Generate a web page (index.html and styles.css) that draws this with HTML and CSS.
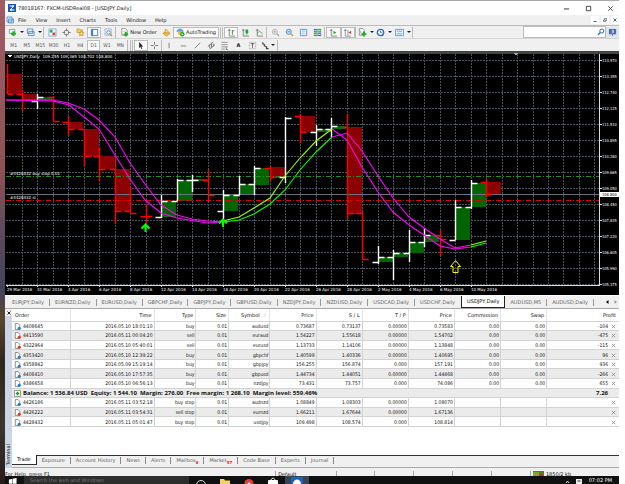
FILE: index.html
```html
<!DOCTYPE html>
<html lang="en">
<head>
<meta charset="utf-8">
<title>78018167: FXCM-USDReal08 - [USDJPY,Daily]</title>
<link rel="stylesheet" href="styles.css">
</head>
<body>
<main class="window">
  <header class="titlebar">
    <svg class="logo" viewBox="0 0 8 8"><rect width="8" height="8" fill="#1557b5"/><path d="M1.5 2h4.5L2 6h4.5M5 1v2M3 5v2" fill="none" stroke="#fff"/></svg>
    <h1>78018167: FXCM-USDReal08 - [USDJPY,Daily]</h1>
    <div class="winctl">
      <button aria-label="Minimize"><svg viewBox="0 0 8 8"><path d="M1 4.5h6" stroke="#222"/></svg></button>
      <button aria-label="Maximize"><svg viewBox="0 0 8 8"><path d="M1.5 1.500h5v5h-5z" fill="none" stroke="#333"/></svg></button>
      <button aria-label="Close"><svg viewBox="0 0 8 8"><path d="M1.500 1.500l5 5m0-5l-5 5" stroke="#333"/></svg></button>
    </div>
  </header>

  <nav class="menubar">
    <svg class="docicon" viewBox="0 0 8 8"><path d="M1 1h5v5H1zM2.500 3h5v4h-5z" fill="#e5f2ff" stroke="#4a87c8" stroke-width=".8"/><path d="M3 5l1.500-1 1 1 1.500-1" fill="none" stroke="#4a87c8" stroke-width=".6"/></svg>
    <a href="#">File</a><a href="#">View</a><a href="#">Insert</a><a href="#">Charts</a><a href="#">Tools</a><a href="#">Window</a><a href="#">Help</a>
    <div class="docctl">
      <button aria-label="Minimize chart"><svg viewBox="0 0 6 6"><path d="M1.500 4.500h3" stroke="#4d5f7d"/></svg></button>
      <button aria-label="Restore chart"><svg viewBox="0 0 6 6"><path d="M2.500 3V1.500h2V4M1.500 3h2v1.500h-2z" fill="none" stroke="#4d5f7d" stroke-width=".7"/></svg></button>
      <button aria-label="Close chart"><svg viewBox="0 0 6 6"><path d="M1.500 1.500l3 3m0-3l-3 3" stroke="#4d5f7d"/></svg></button>
    </div>
  </nav>

  <div class="toolbar">
    <div class="group g-charts">
      <button class="drop" aria-label="New chart"><svg viewBox="0 0 10 10"><path d="M1.500 1.500h6v4.500h-6z" fill="#fff" stroke="#6b7d8c" stroke-width=".8"/><path d="M6 3.500v5.500M3.300 6.300h5.500" stroke="#17b117" stroke-width="2.200"/></svg></button>
      <button class="drop" aria-label="Profiles"><svg viewBox="0 0 10 10"><path d="M1.500 1h6v5h-6zM3 4h6v4.500H3z" fill="#e3eefb" stroke="#5682b4" stroke-width=".9"/></svg></button>
    </div>
    <div class="group g-panels">
      <button aria-label="Market Watch"><svg viewBox="0 0 10 10"><path d="M1 1h8v8H1z" fill="#e9f4ff" stroke="#67a2d8" stroke-width=".8"/><path d="M2 2h3v3H2z" fill="#32ad45"/><path d="M5 5h3v3H5z" fill="#e6402e"/></svg></button>
      <button aria-label="Data Window"><svg viewBox="0 0 10 10"><circle cx="5" cy="5" r="2.700" fill="none" stroke="#777"/><path d="M5 .5v3m0 3v3M.5 5h3m3 0h3" stroke="#777"/></svg></button>
      <button aria-label="Navigator"><svg viewBox="0 0 10 10"><path d="M1 1h3l1 1h2v3H1z" fill="#f5cf58" stroke="#b88a1d" stroke-width=".6"/><path d="M6 3l1 2 2 .3-1.500 1.500.5 2L6 8l-2 1 .4-2.200L3 5.300 5 5z" fill="#ffd34a" stroke="#b37c14" stroke-width=".6"/></svg></button>
      <button class="on" aria-label="Terminal"><svg viewBox="0 0 10 10"><path d="M1.500 1.500h7v7h-7z" fill="#fff" stroke="#3d78c4"/><path d="M1.500 1.500h2v7h-2z" fill="#3d78c4"/></svg></button>
      <button aria-label="Strategy Tester"><svg viewBox="0 0 10 10"><path d="M1 1h7v7H1z" fill="#e3effb" stroke="#8aa8c6" stroke-width=".7"/><circle cx="5" cy="5" r="2" fill="#fff" stroke="#5681b3"/><path d="M6.500 6.500L9 9" stroke="#c79026" stroke-width="1.400"/></svg></button>
    </div>
    <button class="order"><svg viewBox="0 0 10 10"><path d="M2 .5h4l2 2V8H2z" fill="#fff" stroke="#777" stroke-width=".8"/><path d="M3.500 3.500h3" stroke="#888" stroke-width=".6"/><path d="M6.500 4.500v5M4 7h5" stroke="#17b117" stroke-width="2"/></svg>New Order</button>
    <button class="meta" aria-label="MetaEditor"><svg viewBox="0 0 10 10"><path d="M1 6l4-2 4 2-4 3z" fill="#f5c33f" stroke="#a97716" stroke-width=".7"/><path d="M4 1l3 3-1 2-3-1z" fill="#ffd95e" stroke="#a97716" stroke-width=".6"/></svg></button>
    <button class="auto on"><svg viewBox="0 0 10 10"><path d="M1 4c0-4 7-4 7 0z" fill="#5aa5df" stroke="#2b72b0" stroke-width=".5"/><path d="M2 4h5v2l-2 2-3-1z" fill="#f0c04a"/><circle cx="7" cy="7" r="2.500" fill="#17a82a"/><path d="M6.300 5.700v2.600L8.400 7z" fill="#fff"/></svg>AutoTrading</button>
    <i class="grip"></i>
    <div class="group g-types">
      <button class="on" aria-label="Bar chart"><svg viewBox="0 0 10 10"><path d="M2.500 1v8H9M1 2.500h3" fill="none" stroke="#666" stroke-width=".8"/><path d="M6 2.500v5M6 3h2" stroke="#159c25"/></svg></button>
      <button aria-label="Candlesticks"><svg viewBox="0 0 10 10"><path d="M2.500 1v8H9M1 2.500h3" fill="none" stroke="#666" stroke-width=".8"/><path d="M6.500 1v7" stroke="#159c25" stroke-width=".7"/><path d="M5 2h3v4H5z" fill="#1cab2c"/></svg></button>
      <button aria-label="Line chart"><svg viewBox="0 0 10 10"><path d="M2.500 1v8H9M1 2.500h3" fill="none" stroke="#666" stroke-width=".8"/><path d="M2.500 6L5 3.500l3.500 3" fill="none" stroke="#159c25" stroke-width=".8"/></svg></button>
    </div>
    <div class="group g-zoom">
      <button aria-label="Zoom in"><svg viewBox="0 0 10 10"><circle cx="4.200" cy="4.200" r="2.800" fill="#f1f1f1" stroke="#aaa"/><path d="M6.500 6.500l2.500 2.500" stroke="#aaa" stroke-width="1.600"/><path d="M2.700 4.200h3m-1.500-1.500v3" stroke="#999" stroke-width=".8"/></svg></button>
      <button aria-label="Zoom out"><svg viewBox="0 0 10 10"><circle cx="4.200" cy="4.200" r="2.800" fill="#d9ecff" stroke="#4385cb"/><path d="M6.500 6.500l2.500 2.500" stroke="#d79a29" stroke-width="1.600"/><path d="M2.700 4.200h3" stroke="#2766ad" stroke-width=".8"/></svg></button>
      <button aria-label="Arrange"><svg viewBox="0 0 10 10"><path d="M1.500 1.500h7v7h-7z" fill="#eaf4ff" stroke="#5c92c9"/><path d="M3 3.500h4M3.500 5v2m2-2v2" stroke="#89aed4" stroke-width=".8"/></svg></button>
      <button aria-label="Tile windows"><svg viewBox="0 0 10 10"><path d="M1 1h3.800v3.800H1z" fill="#3b6fc0"/><path d="M5.200 1H9v3.800H5.200z" fill="#36a839"/><path d="M1 5.200h3.800V9H1z" fill="#36a839"/><path d="M5.200 5.200H9V9H5.200z" fill="#3b6fc0"/><path d="M1.500 3h2.700m1.500 0h2.700m-6.900 4h2.700m1.500 0h2.700" stroke="#e8f3e8" stroke-width="1.200"/></svg></button>
    </div>
    <div class="group g-scroll">
      <button class="on" aria-label="Auto scroll"><svg viewBox="0 0 10 10"><path d="M2.500 1v8H9M1 2.500h3" fill="none" stroke="#666" stroke-width=".8"/><path d="M5 3l3 2-3 2z" fill="#1ba72b"/></svg></button>
      <button class="on" aria-label="Chart shift"><svg viewBox="0 0 10 10"><path d="M2.500 1v8H9M1 2.500h3M5.500 2v6" fill="none" stroke="#5b7a96" stroke-width=".8"/><path d="M9 3L6 5l3 2z" fill="#c8502c"/></svg></button>
    </div>
    <div class="group g-tools">
      <button class="drop" aria-label="Indicators"><svg viewBox="0 0 10 10"><path d="M1.500.5h4l1.500 2V8H1.500z" fill="#fff" stroke="#777" stroke-width=".8"/><path d="M3 3v3" stroke="#777" stroke-width=".7"/><path d="M6.500 4v5.500M3.800 6.800h5.500" stroke="#17b117" stroke-width="2"/></svg></button>
      <button class="drop" aria-label="Periods"><svg viewBox="0 0 10 10"><circle cx="5" cy="5" r="3.500" fill="#fff" stroke="#2b6fc2" stroke-width="1.600"/><path d="M5 3v2h1.500" fill="none" stroke="#333" stroke-width=".7"/></svg></button>
      <button class="drop" aria-label="Templates"><svg viewBox="0 0 10 10"><path d="M.5 1.500h9v7h-9z" fill="#e6f2ff" stroke="#5c92c9" stroke-width=".9"/><path d="M2 4l2-1 2 1 2-1" fill="none" stroke="#c4533c" stroke-width=".8"/><path d="M2 7l2-1 2 1 2-1" fill="none" stroke="#3a9b4b" stroke-width=".8"/></svg></button>
    </div>
    <div class="search">
      <input type="search" aria-label="Search">
      <svg viewBox="0 0 8 8"><circle cx="4.800" cy="3" r="2" fill="none" stroke="#2a6cc8"/><path d="M3.300 4.500L1 7" stroke="#2a6cc8" stroke-width="1.300"/></svg>
    </div>
    <button class="chat" aria-label="Chat"><svg viewBox="0 0 10 10"><path d="M1 1h8v6H6L5 9 4 7H1z" fill="#4d6ba6"/><path d="M4 2.500h2v1.500H4.500M6 4v1.500H4" fill="none" stroke="#fff" stroke-width=".7"/></svg></button>
  </div>

  <div class="toolbar second">
    <div class="group g-frames">
      <button>M1</button><button>M5</button><button>M15</button><button>M30</button><button>H1</button><button>H4</button><button class="on">D1</button><button>W1</button><button>MN</button>
    </div>
    <i class="grip"></i>
    <div class="group g-cursor">
      <button class="on" aria-label="Cursor"><svg viewBox="0 0 10 10"><path d="M3.500 1v7l1.500-1.500 1 2.500 1-.5-1-2.300h2z" fill="#222"/></svg></button>
      <button aria-label="Crosshair"><svg viewBox="0 0 10 10"><path d="M5 1v3m0 2v3M1 5h3m2 0h3" stroke="#666"/></svg></button>
    </div>
    <div class="group g-lines">
      <button aria-label="Vertical line"><svg viewBox="0 0 10 10"><path d="M4.500 2v6" stroke="#777"/></svg></button>
      <button aria-label="Horizontal line"><svg viewBox="0 0 10 10"><path d="M2 5.500h6" stroke="#777"/></svg></button>
      <button aria-label="Trendline"><svg viewBox="0 0 10 10"><path d="M2 8l6-6" stroke="#777"/></svg></button>
      <button aria-label="Channel"><svg viewBox="0 0 10 10"><path d="M1 6l6-5M3 9l6-5M3 4v4m2-6v5m2-4v3" stroke="#666" stroke-width=".9"/></svg></button>
      <button aria-label="Fibonacci"><svg viewBox="0 0 10 10"><path d="M1.500 1.500h7m-7 2.500h7m-7 2.500h7m-7 2.500h4" stroke="#777" stroke-width=".8"/><path d="M7 7v2.500h2" fill="none" stroke="#555" stroke-width=".8"/></svg></button>
      <button class="letter">A</button>
      <button aria-label="Text label"><svg viewBox="0 0 10 10"><path d="M1.500 1.500h7v7h-7z" fill="none" stroke="#999" stroke-width=".8" stroke-dasharray="1 .6"/><path d="M3 3h4M5 3v4.500" stroke="#555"/></svg></button>
      <button class="drop" aria-label="Arrows"><svg viewBox="0 0 10 10"><path d="M1.500 2l3 2.500M3 5l4 2M2 1.500v2.500m4 2v2.500h2.500" stroke="#444" stroke-width="1.200" fill="none"/></svg></button>
    </div>
  </div>

  <section class="chart" aria-label="USDJPY,Daily">
    <svg id="chart" viewBox="5 51 614 244"></svg>
  </section>

  <nav class="charttabs">
    <a href="#">EURJPY,Daily</a><a href="#">EURNZD,Daily</a><a href="#">EURUSD,Daily</a><a href="#">GBPCHF,Daily</a><a href="#">GBPJPY,Daily</a><a href="#">GBPUSD,Daily</a><a href="#">NZDJPY,Daily</a><a href="#">NZDUSD,Daily</a><a href="#">USDCAD,Daily</a><a href="#">USDCHF,Daily</a><a href="#" class="active">USDJPY,Daily</a><a href="#">AUDUSD,M5</a><a href="#">AUDUSD,Daily</a>
    <span class="arrows"><button aria-label="Previous tabs"><svg viewBox="0 0 4 6"><path d="M3.500 1v4L1 3z" fill="#000"/></svg></button><button aria-label="Next tabs"><svg viewBox="0 0 4 6"><path d="M.5 1v4L3 3z" fill="#999"/></svg></button></span>
  </nav>

  <section class="terminal">
    <aside class="side"><button aria-label="Close terminal"><svg viewBox="0 0 6 6"><path d="M1.500 1.500l3 3m0-3l-3 3" stroke="#222"/></svg></button><span>Terminal</span></aside>
    <div class="pane">
      <div class="sheet">
      <table>
        <colgroup><col class="c-order"><col class="c-time"><col class="c-type"><col class="c-size"><col class="c-symbol"><col class="c-num"><col class="c-num"><col class="c-num"><col class="c-num"><col class="c-num"><col class="c-num"><col class="c-profit"></colgroup>
        <thead><tr><th>Order</th><th>Time</th><th>Type</th><th>Size</th><th class="sorted">Symbol<span>⁄</span></th><th>Price</th><th>S / L</th><th>T / P</th><th>Price</th><th>Commission</th><th>Swap</th><th>Profit</th></tr></thead>
        <tbody id="orders"></tbody>
      </table>
      </div>
      <nav class="tabs">
        <a href="#" class="active">Trade</a><a href="#">Exposure</a><a href="#">Account History</a><a href="#">News</a><a href="#">Alerts</a><a href="#">Mailbox<sub>8</sub></a><a href="#">Market<sub>57</sub></a><a href="#">Code Base</a><a href="#">Experts</a><a href="#">Journal</a>
      </nav>
    </div>
  </section>

  <footer class="status">
    <span class="help">For Help, press F1</span><span class="profile">Default</span><span></span><span></span><span></span><span></span><span></span><span class="net"><svg viewBox="0 0 11 6"><rect width="11" height="6" fill="#587c1f"/><path d="M1 1v4m2-4v4m2-4v4" stroke="#a6cf4e"/><path d="M6 3h4v3H6z" fill="#b53b2b"/></svg>1850/2 kb</span>
  </footer>

  <div class="taskbar">
    <svg class="start" viewBox="0 0 10 7"><path d="M1 2.500l3.500-.8V7H1zM5 1.600L9.500.8V7H5z" fill="#fff"/></svg>
    <div class="find">Search the web and Windows</div>
    <div class="apps">
      <span><svg viewBox="0 0 12 7"><circle cx="6" cy="8" r="4.500" fill="none" stroke="#ddd"/></svg></span>
      <span><svg viewBox="0 0 12 7"><path d="M1 2h4l1 1.500h5V7H1z" fill="#f6d264"/></svg></span>
      <span><svg viewBox="0 0 12 7"><circle cx="6" cy="6.500" r="4.500" fill="#db4437"/><circle cx="6" cy="7" r="1.500" fill="#fff"/></svg></span>
      <span><svg viewBox="0 0 12 7"><path d="M1.500 3.500h9V7h-9zM4 3.500c0-3 4-3 4 0" fill="none" stroke="#fff"/><path d="M1.500 4h9v3h-9z" fill="#fff"/></svg></span>
      <span class="current"><svg viewBox="0 0 12 7"><rect width="12" height="7" fill="#1a5fd0"/><path d="M2 7c0-6 8-6 8 0z" fill="#fff"/></svg></span>
    </div>
    <div class="tray"><svg viewBox="0 0 18 7"><path d="M1 6l1.500-2L4 6" fill="none" stroke="#ddd"/><path d="M11 2h6v5h-6z" fill="#eee"/><path d="M12.500 4h3" stroke="#333"/></svg><time>07:02 PM</time></div>
  </div>
</main>
<script src="chart.js"></script>
</body>
</html>
```
FILE: chart.js
```js
const STEP = 15.47;
const barX = i => 22 + STEP * i;
const out = [];
const add = s => out.push(s);

// Frame and grid
add('<rect class="edge" x="5" y="51" width="614" height="3"/>');
let grid = '';
for (let i = 0; i <= 37; i++) grid += `M${Math.round(barX(i))}.5 54V285`;
for (let y = 60; y <= 284; y += 16) grid += `M6 ${y}.5H599`;
add(`<path class="grid" d="${grid}"/>`);

// Each bar: slot, direction, high, low, body top, body bottom, left tick, right tick
const bars = [
  [-1, 'd', 64, 94, 74, 94, 0, 94], [0, 'd', 90, 111, 94, 101, 94, 0],
  [1, 'u', 94, 109, 97, 100, 101, 97], [2, 'd', 96, 121, 0, 0, 97, 121],
  [3, 'd', 116, 136, 122, 129, 122, 129], [4, 'd', 129, 166, 129, 156, 129, 156],
  [5, 'd', 147, 181, 156, 169, 156, 169], [6, 'd', 157, 224, 169, 211, 169, 211],
  [7, 'd', 187, 213, 0, 0, 211, 213], [8, 'd', 204, 223, 0, 0, 216, 216],
  [9, 'u', 195, 218, 201, 217, 217, 201], [10, 'u', 179, 201, 180, 201, 201, 180],
  [11, 'u', 175, 192, 179, 181, 180, 180], [12, 'd', 170, 201, 0, 0, 180, 195],
  [13, 'u', 190, 220, 195, 211, 211, 195], [14, 'u', 176, 195, 184, 195, 195, 184],
  [15, 'u', 166, 195, 168, 185, 184, 168], [16, 'd', 166, 182, 167, 178, 168, 177],
  [17, 'u', 117, 183, 0, 0, 177, 118], [18, 'd', 114, 143, 116, 132, 116, 132],
  [19, 'u', 125, 146, 129, 132, 132, 129], [20, 'u', 118, 137, 126, 129, 129, 126],
  [21, 'd', 114, 219, 127, 214, 127, 213], [22, 'd', 211, 260, 0, 0, 213, 259],
  [23, 'u', 246, 264, 257, 262, 262, 257], [24, 'u', 250, 280, 253, 257, 257, 253],
  [25, 'u', 230, 262, 242, 253, 253, 242], [26, 'u', 228, 247, 235, 242, 242, 235],
  [27, 'd', 230, 256, 0, 0, 235, 239], [28, 'u', 200, 240, 207, 240, 240, 207],
  [29, 'u', 180, 209, 183, 207, 207, 183], [30, 'd', 179, 197, 182, 195, 182, 194]
];
for (const [i, dir, , , top, bottom] of bars)
  if (bottom) add(`<rect class="body-${dir}" x="${Math.round(barX(i))}" y="${top}" width="15" height="${bottom - top}"/>`);

add('<path class="price" d="M6 194.500H599"/>');
add('<path class="order-open" d="M6 176.500H599"/><path class="order-stop" d="M6 200.500H599"/>');

for (const [i, dir, high, low, , , left, right] of bars) {
  const x = Math.max(6, Math.round(barX(i))) + 0.5;
  let d = `M${x} ${high}V${low}`;
  if (left) d += `M${x} ${left}.5h-6`;
  if (right) d += `M${x} ${right}.5h6`;
  add(`<path class="bar-${dir}" d="${d}"/>`);
}

// Moving averages
const line = (cls, pts) => add(`<polyline class="${cls}" points="${pts}"/>`);
line('ma-down', '6,100 53,100 68,103 84,109 99,120 115,137 130,163 145,184 161,205 177,215 192,219 207,221 223,222');
line('ma-down', '6,100 53,101 69,105 84,117 99,129 115,155 130,179 145,200 161,213 177,218 207,223 223,222');
line('ma-down', '332,129 347,140 362,167 378,192 393,212 409,225 424,235 440,246 455,249 471,247');
line('ma-down', '332,137 347,133 362,151 378,176 393,198 409,217 424,228 440,239 455,248 471,245');
line('ma-fast', '223,221 239,217 254,208 270,198 285,176 300,158 316,141 332,129');
line('ma-slow', '223,222 239,220 254,214 270,204 285,190 300,170 316,152 332,137');
line('ma-fast', '471,245 486,241');
line('ma-slow', '471,247 486,243');

// Signal arrows
add('<path class="signal" d="M145.500 232V224M141.500 228.500l4-4 4 4M223 227v-8M219 223.500l4-4 4 4"/>');
add('<path class="signal-open" d="M455.500 260.500l-5 6h2.500v6h5v-6h2.500z"/>');

// Axes
add('<path class="axis" d="M6 285.500H599.500V54"/>');
const prices = ['113.970', '113.355', '112.740', '112.125', '111.510', '110.895', '110.280', '109.665', '109.050', '108.450', '107.835', '107.220', '106.605', '105.990', '105.375'];
prices.forEach((p, n) => add(`<path class="axis" d="M600 ${60 + 16 * n}.5h2"/><text x="602" y="${62 + 16 * n}">${p}</text>`));
const dates = ['29 Mar', '31 Mar', '4 Apr', '6 Apr', '8 Apr', '12 Apr', '14 Apr', '18 Apr', '20 Apr', '22 Apr', '26 Apr', '28 Apr', '2 May', '4 May', '6 May', '10 May'];
dates.forEach((t, n) => {
  const x = Math.round(barX(2 * n - 1));
  add(`<path class="axis" d="M${x}.5 285v2"/><text class="wide" x="${x}" y="291">${t} 2016</text>`);
});
add('<rect x="600" y="192" width="19" height="5" fill="#fff"/><text class="now" x="602" y="196">108.800</text>');
add('<path d="M8 55h4l-2 3z" fill="#fff"/><text class="wide" x="14" y="58">USDJPY,Daily&#160; 109.255 109.365 108.702 108.800</text>');
add('<text class="wide" x="10" y="175">#4428432 buy stop 0.01</text><text class="wide" x="10" y="199">#4428432 sl</text>');
add('<path d="M514 53h4l-2 3z" fill="#9aa9bd"/>');
document.getElementById('chart').innerHTML = out.join('');

// Terminal rows
const orders = [
  '4408645|2016.05.10 18:01:10|buy|0.01|audusd|0.73687|0.73137|0.00000|0.73583|0.00|0.00|-104',
  '4413590|2016.05.11 00:04:20|sell|0.01|euraud|1.54227|1.55618|0.00000|1.54702|0.00|0.00|-475',
  '4322964|2016.05.10 05:40:01|sell|0.01|eurusd|1.13733|1.14106|0.00000|1.13848|0.00|0.00|-115',
  '4353420|2016.05.10 12:39:22|buy|0.01|gbpchf|1.40599|1.40336|0.00000|1.40695|0.00|0.00|96',
  '4358842|2016.05.09 15:19:14|buy|0.01|gbpjpy|156.255|156.874|0.000|157.191|0.00|0.00|936',
  '4408410|2016.05.10 17:57:35|buy|0.01|gbpusd|1.44734|1.44051|0.00000|1.44468|0.00|0.00|-266',
  '4386658|2016.05.10 06:56:13|buy|0.01|nzdjpy|73.431|73.757|0.000|74.086|0.00|0.00|655',
  null,
  '4426186|2016.05.11 03:52:18|buy stop|0.01|audnzd|1.08849|1.08303|0.00000|1.08070||| ',
  '4426222|2016.05.11 03:54:31|sell stop|0.01|eurnzd|1.66211|1.67644|0.00000|1.67136||| ',
  '4428432|2016.05.11 05:01:47|buy stop|0.01|usdjpy|109.498|108.574|0.000|108.814||| '
];
const icon = color => `<svg viewBox="0 0 8 8"><path d="M1.500.5h3l2 2v5h-5z" fill="#fff" stroke="#666" stroke-width=".8"/><circle cx="6" cy="6" r="1.800" fill="${color}"/></svg>`;
const close = '<button aria-label="Close order"><svg viewBox="0 0 6 6"><path d="M1 1l4 4m0-4L1 5" stroke="#888"/></svg></button>';
document.getElementById('orders').innerHTML = orders.map(row => {
  if (!row) return '<tr class="balance"><td colspan="11"><svg viewBox="0 0 8 8"><path d="M.5.500h7v7h-7z" fill="#fff" stroke="#888"/><path d="M4 2v4M2 4h4" stroke="#12a012" stroke-width="1.500"/></svg>Balance: 1 536.84 USD&nbsp; Equity: 1 544.10&nbsp; Margin: 276.00&nbsp; Free margin: 1 268.10&nbsp; Margin level: 559.46%</td><td>7.26</td></tr>';
  const cells = row.split('|');
  const color = cells[2].startsWith('buy') ? '#1d7fd0' : '#df3a1c';
  return '<tr>' + cells.map((c, n) => `<td>${n === 0 ? icon(color) : ''}${c}${n === 11 ? close : ''}</td>`).join('') + '</tr>';
}).join('');
```
FILE: styles.css
```css
* { box-sizing: border-box; }
body {
  margin: 0;
  height: 100vh;
  overflow: hidden;
  padding: 0 6px 0 5px;
  background:
    linear-gradient(#a05c62, #8f5158 35%, #5d4a5c 48%, #44435a 60%, #5b4630 66%, #2e261d 75%, #3f352f 88%, #241d1a) left / 5px 100% no-repeat,
    #fff;
  font: 5px/8px "DejaVu Sans", sans-serif;
  color: #111;
}
button {
  margin: 0; padding: 0; border: 1px solid transparent; background: none;
  font: inherit; color: inherit;
  display: flex; align-items: center; justify-content: center;
}
a { color: inherit; text-decoration: none; }
svg { display: block; flex: none; }

.window { display: flex; flex-direction: column; height: 100%; background: #f0f0f0; }

.titlebar { display: flex; align-items: center; height: 15px; padding-left: 3px; background: #fff; border-top: 1px solid #aaa; flex: none; }
.logo { width: 8px; height: 8px; margin-right: 2px; }
.titlebar h1 { margin: 0; font-size: 5px; font-weight: 400; }
.winctl { display: flex; margin-left: auto; gap: 14px; padding-right: 5px; }
.winctl svg { width: 7px; height: 7px; }
.winctl button { border: 0; width: 8px; }

.menubar { display: flex; align-items: center; height: 10px; padding-left: 1px; gap: 9px; flex: none; }
.docicon { width: 8px; height: 8px; margin-right: -5px; }
.docctl { display: flex; gap: 2px; margin-left: auto; }
.docctl button { border: 0; width: 8px; height: 8px; background: #fff; }
.docctl svg { width: 6px; height: 6px; }

.toolbar { display: flex; align-items: center; height: 13px; padding-left: 2px; border-top: 1px solid #bbb; flex: none; }
.toolbar svg { width: 9px; height: 9px; }
.toolbar button { height: 11px; }
.toolbar .on { background: #f9f9f9; border-color: #bcbcbc; }
.group { display: flex; border-right: 1px solid #bbb; margin-right: 1px; }
.group button { flex: 1 1 0; min-width: 0; }
.drop::after { content: ""; border: 2px solid transparent; border-top-color: #222; border-bottom: 0; margin-left: 3px; }
.g-charts { width: 37px; }
.g-panels { width: 71px; }
.g-types { width: 43px; }
.g-zoom { width: 57px; }
.g-scroll { width: 30px; }
.g-tools { width: 56px; }
.order { width: 43px; gap: 1px; white-space: nowrap; }
.meta { width: 13px; }
.auto { width: 46px; gap: 1px; white-space: nowrap; }
.grip { width: 3px; height: 11px; margin: 0 1px; border: solid #bbb; border-width: 0 1px; }
.search { display: flex; align-items: center; width: 83px; height: 12px; margin-left: auto; background: #fff; border: 1px solid #bbb; }
.search input { flex: 1; min-width: 0; height: 8px; padding: 0; border: 0; background: none; font: inherit; }
.search svg { width: 8px; height: 8px; }
.toolbar .chat { width: 13px; background: #dfe3ea; }

.second { border-color: #d5d5d5; }
.g-frames { width: 121px; color: #555; font-family: "DejaVu Sans Condensed", sans-serif; }
.g-cursor { width: 28px; }
.g-lines { width: 115px; }
.g-lines .drop { flex: 0 0 18px; }
.g-lines .letter { font-weight: 700; }
.g-lines .drop::after { margin-left: 1px; }

.chart { flex: none; background: #000; }
.chart svg { width: 100%; height: auto; font: 4px "DejaVu Sans Condensed", "DejaVu Sans", sans-serif; fill: none; shape-rendering: crispEdges; }
.chart text { fill: #fff; }
.chart .wide { font-family: "DejaVu Sans", sans-serif; }
.chart .now { fill: #000; }
.edge { fill: #444; }
.grid { stroke: #48525d; stroke-dasharray: 2 1; }
.price { stroke: #66727f; }
.order-open { stroke: #1f8f1f; stroke-dasharray: 5 2 1 2; }
.order-stop { stroke: #e00000; stroke-dasharray: 5 2 1 2; }
.body-u { fill: #006400; }
.body-d { fill: #8b0000; }
.bar-u, .bar-d { stroke-width: 1.4; shape-rendering: auto; }
.bar-u { stroke: #fff; }
.bar-d { stroke: #f00; }
.ma-down, .ma-fast, .ma-slow { shape-rendering: auto; stroke-width: 1.1; }
.ma-down { stroke: #f0f; }
.ma-fast { stroke: #9f0; }
.ma-slow { stroke: #0f0; }
.signal { stroke: #0f0; stroke-width: 2; shape-rendering: auto; }
.signal-open { stroke: #ff0; shape-rendering: auto; }
.axis { stroke: #ddd; }

.charttabs { display: flex; align-items: center; height: 13px; flex: none; padding-left: 2px; color: #666; border-top: 1px solid #fff; }
.charttabs a { padding: 0 5px; border-right: 1px solid #999; line-height: 7px; white-space: nowrap; }
.charttabs .active { background: #fff; color: #000; border: 1px solid #222; border-top: 0; padding: 1px 5px; line-height: 9px; }
.charttabs a:nth-child(10) { border-right-color: transparent; }
.arrows { display: flex; gap: 5px; margin-left: auto; padding-right: 1px; }
.arrows button { border: 0; width: 4px; }
.arrows svg { width: 4px; height: 6px; }

.terminal { flex: 1; min-height: 0; display: flex; border-top: 1px solid #aaa; }
.side { width: 7px; flex: none; display: flex; flex-direction: column; justify-content: space-between; background: #cbd7e5; }
.side button { border: 0; height: 7px; background: #f0f0f0; }
.side svg { width: 6px; height: 6px; }
.side span { writing-mode: vertical-rl; transform: rotate(180deg); line-height: 7px; padding-top: 3px; }
.pane { flex: 1; min-width: 0; display: flex; flex-direction: column; background: #f0f0f0; }
.sheet { flex: 1; background: #fff; border-bottom: 1px solid #333; }

table { width: 100%; height: 118px; table-layout: fixed; border-collapse: collapse; }
th, td { padding: 0 1px; text-align: right; font-weight: 400; line-height: 8px; white-space: nowrap; overflow: hidden; border-right: 1px solid #d3d3d3; border-bottom: 1px solid #d3d3d3; }
td { font-family: "DejaVu Sans Condensed", sans-serif; }
th { height: 12px; padding-right: 2px; border-right-color: #e5e5e5; }
tr > :first-child { text-align: left; }
th:first-child { padding-left: 3px; }
tr > :last-child { border-right: 0; padding-right: 3px; }
.sorted span { color: #999; margin: 0 2px 0 5px; }
tbody tr:nth-child(even) { background: #ebebeb; }
td svg { display: inline-block; vertical-align: middle; width: 7px; height: 7px; margin: 0 2px 0 1px; }
td button { display: inline-flex; vertical-align: middle; border: 0; width: 5px; height: 7px; margin-left: 3px; }
td button svg { width: 5px; height: 5px; margin: 0; }
tbody .balance { background: #c6c6c6; }
.balance td { font: 700 6px/8px "Open Sans", "Noto Sans", sans-serif; border-right: 0; }
.balance td:last-child { padding-right: 11px; }
.c-order { width: 9.7%; }
.c-time { width: 13.7%; }
.c-type { width: 6.9%; }
.c-size { width: 5.4%; }
.c-symbol { width: 6.8%; }
.c-num { width: 7.6%; }
.c-profit { width: 11.9%; }

.tabs { display: flex; height: 12px; flex: none; padding-bottom: 2px; align-items: center; color: #666; border-bottom: 1px solid #aaa; }
.tabs a { padding: 0 5px; line-height: 7px; border-right: 1px solid #888; white-space: nowrap; }
.tabs .active { align-self: flex-start; margin-top: -1px; background: #fff; color: #000; line-height: 9px; border-right-color: #222; border-bottom: 1px solid #333; }
.tabs sub { color: #e22; font-size: 4px; line-height: 0; font-weight: 700; }

.status { display: flex; height: 8px; flex: none; padding-top: 2px; overflow: hidden; line-height: 8px; }
.status span { flex: 1 1 0; border-left: 1px solid #aaa; height: 6px; margin-top: 1px; line-height: 6px; padding-left: 2px; white-space: nowrap; }
.status .help { flex: none; width: 44%; border: 0; padding: 0; }
.status .profile { flex: 1.6 1 0; }
.status .net { display: flex; gap: 2px; flex: 2.4 1 0; }
.status svg { width: 11px; height: 6px; }

.taskbar { display: flex; height: 8px; flex: none; overflow: hidden; background: #111; color: #777; }
.start { width: 9px; height: 7px; margin: 1px 7px 0 3px; }
.find { width: 165px; height: 8px; padding: 1px 0 0 6px; line-height: 7px; background: #2d2d2d; white-space: nowrap; overflow: hidden; }
.apps { display: flex; }
.apps span { width: 24px; padding-top: 1px; }
.apps svg { width: 12px; height: 7px; margin: 0 auto; }
.apps .current { background: #3b4450; }
.tray { display: flex; margin-left: auto; gap: 6px; padding-right: 7px; color: #fff; }
.tray svg { width: 18px; height: 7px; margin-top: 1px; }
```
